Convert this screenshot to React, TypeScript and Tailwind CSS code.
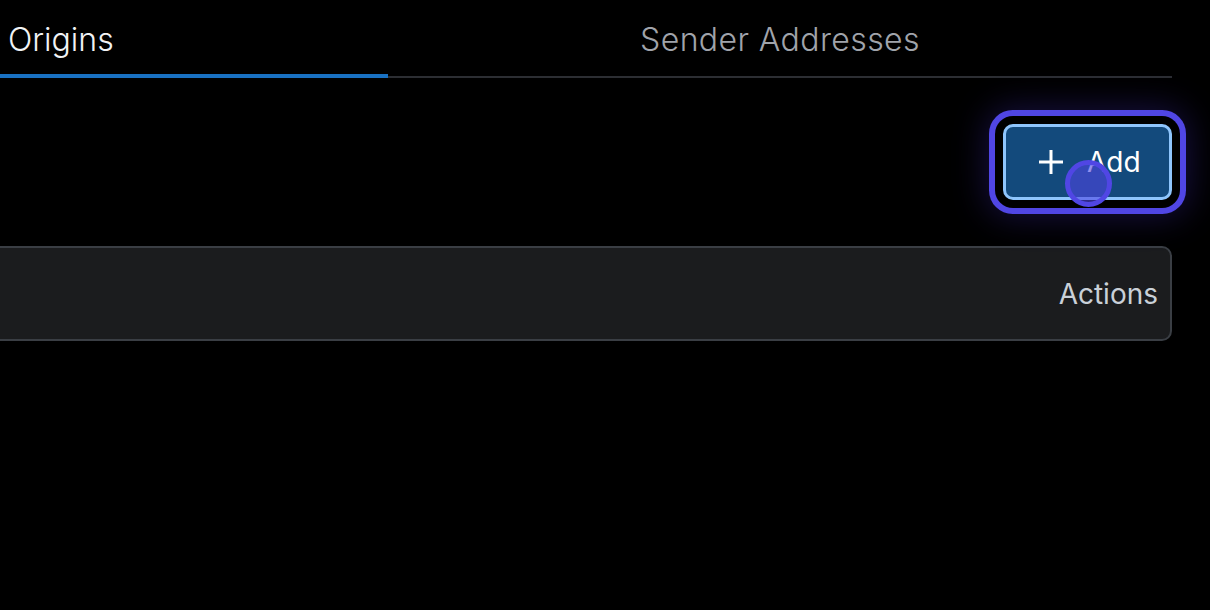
const font = { fontFamily: "Inter, 'Noto Sans', sans-serif" };

function PlusIcon() {
  return (
    <svg width="24" height="24" viewBox="0 0 24 24" fill="none" stroke="currentColor" strokeWidth="3">
      <path d="M0 12h24M12 0v24" />
    </svg>
  );
}

export default function App() {
  return (
    <div className="h-[610px] w-[1210px] overflow-hidden bg-black" style={font}>
      <div className="-ml-[20px] flex w-[1192px] flex-col">
        <div className="flex h-[78px] items-stretch">
          <div className="flex w-[408px] items-center border-b-4 border-[#1971c2] pt-[5px] pl-[28px] text-[32px] font-light text-[#f1f3f5]">
            Origins
          </div>
          <div className="flex flex-1 items-center justify-center border-b-2 border-[#2c2e33] pt-[3px] text-[32px] font-light tracking-[0.4px] text-[#a0a4ab]">
            <span>Sender Addresses</span>
          </div>
        </div>

        <div className="mt-[46px] flex justify-end">
          <button className="relative flex h-[76px] w-[169px] items-center gap-[24px] rounded-[10px] border-[3px] border-[#8ec5fc] bg-[#134a7c] pl-[33px] text-[28px] text-white ring-[6px] ring-[#5046e4] ring-offset-[8px] ring-offset-black shadow-[0_0_34px_16px_rgba(70,50,200,0.33)]">
            <PlusIcon />
            <span className="-mt-[1px]">Add</span>
            <span className="absolute left-[59px] top-[33px] h-[47px] w-[47px] rounded-full border-[5px] border-[#5046e4] bg-[#4f46e5]/60" />
          </button>
        </div>

        <div className="mt-[46px] flex h-[95px] w-[1192px] items-center justify-end rounded-[10px] border-2 border-[#3a3e44] bg-[#1b1c1e] pr-[12px] text-[28px] text-[#c9d0d8]">
          Actions
        </div>
      </div>
    </div>
  );
}
